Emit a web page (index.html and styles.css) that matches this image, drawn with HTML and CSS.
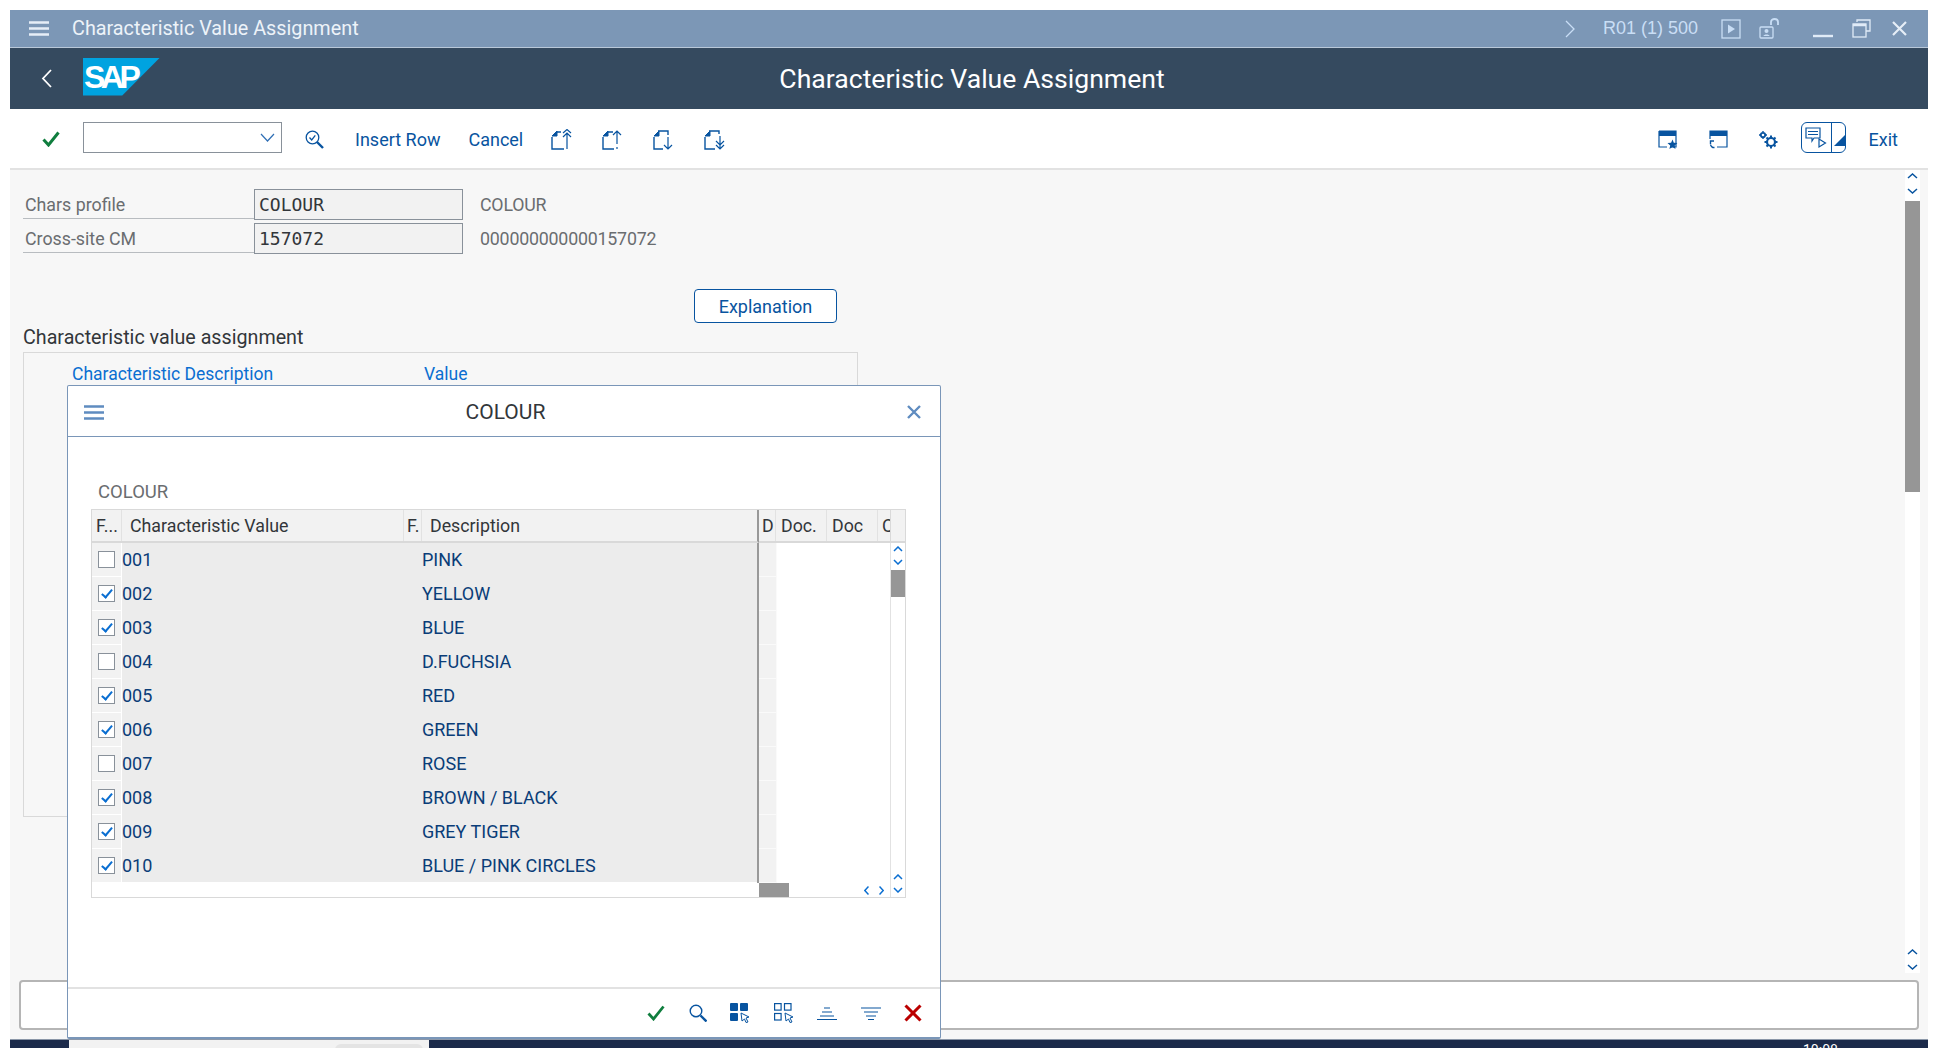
FILE: index.html
```html
<!DOCTYPE html>
<html lang="en">
<head>
  <meta charset="UTF-8" />
  <title>Characteristic Value Assignment</title>
  <link rel="stylesheet" href="styles.css">
</head>
<body>
  <div class="window">
    <!-- Title bar -->
    <div class="titlebar">
      <svg class="menu-icon" width="20" height="15" viewBox="0 0 20 15"><path d="M0 1.5h20M0 7.5h20M0 13.5h20" stroke="#e6eef7" stroke-width="2.4"/></svg>
      <span class="titlebar-text">Characteristic Value Assignment</span>
      <div class="titlebar-right">
        <svg width="10" height="18" viewBox="0 0 10 18"><path d="M1 1l8 8-8 8" fill="none" stroke="#c9def5" stroke-width="1.3"/></svg>
        <span class="system-text">R01 (1) 500</span>
        <svg width="20" height="20" viewBox="0 0 20 20"><rect x="1" y="1" width="18" height="18" fill="none" stroke="#c9def5" stroke-width="1.3"/><path d="M7 5.5l7 4.5-7 4.5z" fill="#c9def5"/></svg>
        <svg class="lock-icon" width="20" height="21" viewBox="0 0 20 21"><path d="M12 7V4c0-4 7-4 7 0v3" fill="none" stroke="#c9def5" stroke-width="1.8"/><rect x="1" y="9" width="13" height="11" rx="1" fill="none" stroke="#c9def5" stroke-width="1.3"/><circle cx="7.5" cy="13" r="2" fill="#c9def5"/><path d="M4.5 18c0-2 6-2 6 0z" fill="#c9def5"/></svg>
        <svg class="win-min" width="20" height="20" viewBox="0 0 20 20"><path d="M0 17h20" stroke="#e0ebf7" stroke-width="2.4"/></svg>
        <svg class="win-max" width="19" height="19" viewBox="0 0 19 19"><path d="M5 3V1h13v11h-4" fill="none" stroke="#e0ebf7" stroke-width="1.3"/><rect x="1" y="5" width="13" height="13" fill="none" stroke="#e0ebf7" stroke-width="1.3"/><path d="M1 6h13" stroke="#e0ebf7" stroke-width="2.5"/></svg>
        <svg class="win-close" width="15" height="15" viewBox="0 0 15 15"><path d="M1 1l13 13M14 1L1 14" stroke="#e6eef7" stroke-width="2.2"/></svg>
      </div>
    </div>

    <!-- Shell header -->
    <div class="shell-header">
      <svg class="back-icon" width="11" height="19" viewBox="0 0 11 19"><path d="M10 1L2 9.5 10 18" fill="none" stroke="#fff" stroke-width="1.8"/></svg>
      <div class="sap-logo"><span>SAP</span></div>
      <div class="shell-title">Characteristic Value Assignment</div>
    </div>

    <!-- Toolbar -->
    <div class="toolbar">
      <svg class="tb-check" width="18" height="16" viewBox="0 0 18 16"><path d="M1.5 8.5L6.5 14 16.5 1.5" fill="none" stroke="#107e3e" stroke-width="3"/></svg>
      <div class="command-box">
        <svg width="15" height="9" viewBox="0 0 15 9"><path d="M1 1l6.5 7L14 1" fill="none" stroke="#2f6fb5" stroke-width="1.2"/></svg>
      </div>
      <svg class="tb-find" width="19" height="19" viewBox="0 0 19 19"><circle cx="7.5" cy="7.5" r="6.3" fill="none" stroke="#0854a0" stroke-width="1.3"/><path d="M4.5 7.5l2.2 2.4 3.6-4.6" fill="none" stroke="#0854a0" stroke-width="1.3"/><path d="M12 12l6 6" stroke="#0854a0" stroke-width="2.4"/></svg>
      <a class="tb-link tb-insert">Insert Row</a>
      <a class="tb-link tb-cancel">Cancel</a>
      <svg class="tb-page" width="22" height="21" viewBox="0 0 22 21"><path d="M5 3h5M1 8v12h12" fill="none" stroke="#0854a0" stroke-width="1.4"/><path d="M1 7l5-5v5z" fill="#0854a0" stroke="#0854a0"/><path d="M16 20V4M12 8l4-4 4 4M12 4l4-3.5 4 3.5" fill="none" stroke="#0854a0" stroke-width="1.2"/></svg>
      <svg class="tb-page" width="22" height="21" viewBox="0 0 22 21"><path d="M5 3h6M1 8v12h11" fill="none" stroke="#0854a0" stroke-width="1.4"/><path d="M1 7l5-5v5z" fill="#0854a0" stroke="#0854a0"/><path d="M15 15V2M11 6l4-4 4 4M15 18v2" fill="none" stroke="#0854a0" stroke-width="1.2"/></svg>
      <svg class="tb-page" width="22" height="21" viewBox="0 0 22 21"><path d="M5 2h10v4M1 8v12h9" fill="none" stroke="#0854a0" stroke-width="1.4"/><path d="M1 7l5-5v5z" fill="#0854a0" stroke="#0854a0"/><path d="M15 8v12M11 16l4 4 4-4" fill="none" stroke="#0854a0" stroke-width="1.2"/></svg>
      <svg class="tb-page" width="22" height="21" viewBox="0 0 22 21"><path d="M5 2h10v3M1 8v12h10" fill="none" stroke="#0854a0" stroke-width="1.4"/><path d="M1 7l5-5v5z" fill="#0854a0" stroke="#0854a0"/><path d="M16 7v12M12 12l4 4 4-4M12 16l4 4 4-4" fill="none" stroke="#0854a0" stroke-width="1.2"/></svg>

      <div class="toolbar-right">
        <svg class="tb-window" width="20" height="19" viewBox="0 0 20 19"><path d="M1 1h17v16h-5M1 1v16h8" fill="none" stroke="#0854a0" stroke-width="1.2"/><rect x="1" y="1" width="17" height="5" fill="#0854a0"/><path d="M14.500 9.500l1.300 3.300 3.600.3-2.700 2.300.8 3.500-3-1.900-3.100 1.900.8-3.500-2.700-2.300 3.600-.3z" fill="#0854a0"/></svg>
        <svg class="tb-window tb-fav" width="20" height="19" viewBox="0 0 20 19"><path d="M2 9V1h17v16H9" fill="none" stroke="#0854a0" stroke-width="1.2"/><rect x="2" y="1" width="17" height="5" fill="#0854a0"/><path d="M6 11H2.500v3M6.500 17.500a3.500 3.500 0 0 1-4-3" fill="none" stroke="#0854a0" stroke-width="1.4"/></svg>
        <svg class="tb-window tb-gears" width="19" height="18" viewBox="0 0 19 18"><circle cx="4" cy="4" r="2.200" fill="none" stroke="#0854a0" stroke-width="1.800"/><path d="M4 0v1M4 7v1M0 4h1M7 4h1" stroke="#0854a0" stroke-width="1.400"/><circle cx="12" cy="11" r="4" fill="none" stroke="#0854a0" stroke-width="2.200"/><path d="M12 4.500v2.500M12 15v2.500M5.500 11H8M16 11h2.500M7.500 6.500l1.800 1.800M16.500 15.500l-1.800-1.800M16.500 6.500l-1.800 1.800M7.500 15.500l1.800-1.800" stroke="#0854a0" stroke-width="2"/></svg>
        <div class="tb-split">
          <div class="tb-split-main">
            <svg width="22" height="22" viewBox="0 0 22 22"><path d="M1 1h14v10H9l-2 3v-3H1z" fill="none" stroke="#0854a0" stroke-width="1.2"/><path d="M3 4.500h10M3 7.500h10" stroke="#0854a0" stroke-width="1.200"/><path d="M14 12v8l6.500-4z" fill="none" stroke="#0854a0" stroke-width="1.200"/></svg>
          </div>
          <div class="tb-split-arrow"><svg width="11" height="11" viewBox="0 0 11 11"><path d="M11 0v11H0z" fill="#0854a0"/></svg></div>
        </div>
        <a class="tb-link tb-exit">Exit</a>
      </div>
    </div>

    <!-- Main content -->
    <div class="content">
      <div class="main-row">
        <div class="main-area">
          <div class="form-row">
            <label class="form-label">Chars profile</label>
            <div class="form-input">COLOUR</div>
            <span class="form-value">COLOUR</span>
          </div>
          <div class="form-row">
            <label class="form-label">Cross-site CM</label>
            <div class="form-input">157072</div>
            <span class="form-value">000000000000157072</span>
          </div>
          <button class="explain-button">Explanation</button>
          <h3 class="section-title">Characteristic value assignment</h3>
          <div class="group-box">
            <span class="group-col-one">Characteristic Description</span>
            <span class="group-col-two">Value</span>
          </div>
        </div>
        <div class="page-scroll">
          <svg class="chev" width="11" height="21" viewBox="0 0 11 21"><path d="M1 5l4.500-4L10 5M1 16l4.500 4 4.500-4" fill="none" stroke="#0854a0" stroke-width="1.500"/></svg>
          <div class="page-thumb"></div>
          <svg class="chev page-chev-end" width="11" height="21" viewBox="0 0 11 21"><path d="M1 5l4.500-4L10 5M1 16l4.500 4 4.500-4" fill="none" stroke="#0854a0" stroke-width="1.500"/></svg>
        </div>
      </div>
      <div class="message-box"></div>
    </div>

    <!-- Bottom bar -->
    <div class="taskbar">
      <div class="taskbar-tab"><div class="taskbar-pill"></div></div>
      <span class="taskbar-time">10:08</span>
    </div>

    <!-- Popup -->
    <div class="modal">
      <div class="modal-header">
        <svg width="20" height="15" viewBox="0 0 20 15"><path d="M0 1.500h20M0 7.500h20M0 13.500h20" stroke="#5f8cc0" stroke-width="2.400"/></svg>
        <span class="modal-title">COLOUR</span>
        <svg width="14" height="14" viewBox="0 0 14 14"><path d="M1 1l12 12M13 1L1 13" stroke="#5f8cc0" stroke-width="2.400"/></svg>
      </div>
      <div class="modal-body">
        <div class="table-caption">COLOUR</div>
        <div class="value-table">
          <div class="head-fixed">
            <div class="head-cell col-sel">F...</div>
            <div class="head-cell col-value">Characteristic Value</div>
            <div class="head-cell col-f">F.</div>
            <div class="head-cell col-desc">Description</div>
          </div>
          <div class="head-free">
            <div class="head-cell col-d">D</div>
            <div class="head-cell col-doc">Doc.</div>
            <div class="head-cell col-doc">Doc</div>
            <div class="head-cell col-clip">C</div>
          </div>
          <div class="head-corner"></div>

          <div class="rows-fixed">
            <div class="row"><div class="row-sel"><span class="check"></span></div><div class="row-main"><span class="row-code">001</span><span>PINK</span></div></div>
            <div class="row"><div class="row-sel"><span class="check checked"></span></div><div class="row-main"><span class="row-code">002</span><span>YELLOW</span></div></div>
            <div class="row"><div class="row-sel"><span class="check checked"></span></div><div class="row-main"><span class="row-code">003</span><span>BLUE</span></div></div>
            <div class="row"><div class="row-sel"><span class="check"></span></div><div class="row-main"><span class="row-code">004</span><span>D.FUCHSIA</span></div></div>
            <div class="row"><div class="row-sel"><span class="check checked"></span></div><div class="row-main"><span class="row-code">005</span><span>RED</span></div></div>
            <div class="row"><div class="row-sel"><span class="check checked"></span></div><div class="row-main"><span class="row-code">006</span><span>GREEN</span></div></div>
            <div class="row"><div class="row-sel"><span class="check"></span></div><div class="row-main"><span class="row-code">007</span><span>ROSE</span></div></div>
            <div class="row"><div class="row-sel"><span class="check checked"></span></div><div class="row-main"><span class="row-code">008</span><span>BROWN / BLACK</span></div></div>
            <div class="row"><div class="row-sel"><span class="check checked"></span></div><div class="row-main"><span class="row-code">009</span><span>GREY TIGER</span></div></div>
            <div class="row"><div class="row-sel"><span class="check checked"></span></div><div class="row-main"><span class="row-code">010</span><span>BLUE / PINK CIRCLES</span></div></div>
          </div>
          <div class="rows-free">
            <div class="free-cell"></div><div class="free-cell"></div><div class="free-cell"></div><div class="free-cell"></div><div class="free-cell"></div>
            <div class="free-cell"></div><div class="free-cell"></div><div class="free-cell"></div><div class="free-cell"></div><div class="free-cell"></div>
          </div>
          <div class="table-scroll">
            <svg class="chev" width="10" height="19" viewBox="0 0 10 19"><path d="M1 5l4-4 4 4M1 14l4 4 4-4" fill="none" stroke="#0a6ed1" stroke-width="1.500"/></svg>
            <div class="table-thumb"></div>
            <svg class="chev table-chev-end" width="10" height="19" viewBox="0 0 10 19"><path d="M1 5l4-4 4 4M1 14l4 4 4-4" fill="none" stroke="#0a6ed1" stroke-width="1.500"/></svg>
          </div>
          <div class="foot-fixed"></div>
          <div class="foot-free">
            <div class="hscroll-thumb"></div>
            <svg width="5" height="9" viewBox="0 0 5 9" class="hscroll-left"><path d="M4.500.500L.8 4.500l3.700 4" fill="none" stroke="#0a6ed1" stroke-width="1.500"/></svg>
            <svg width="5" height="9" viewBox="0 0 5 9"><path d="M.5.500l3.700 4-3.700 4" fill="none" stroke="#0a6ed1" stroke-width="1.500"/></svg>
          </div>
        </div>
      </div>
      <div class="modal-footer">
        <svg width="18" height="16" viewBox="0 0 18 16"><path d="M1.500 8.500L6.500 14 16.500 1.500" fill="none" stroke="#107e3e" stroke-width="2.800"/></svg>
        <svg width="18" height="18" viewBox="0 0 18 18"><circle cx="7" cy="7" r="5.800" fill="none" stroke="#0854a0" stroke-width="1.400"/><path d="M11.500 11.500l6 6" stroke="#0854a0" stroke-width="2.400"/></svg>
        <svg width="20" height="20" viewBox="0 0 20 20"><rect x="0" y="0" width="8" height="8" rx="1" fill="#0854a0"/><rect x="10" y="0" width="8" height="8" rx="1" fill="#0854a0"/><rect x="0" y="10" width="8" height="8" rx="1" fill="#0854a0"/><path d="M11 10l8 4-3 1 2 4-2 .5-1.500-3.500-2.500 2z" fill="#fff" stroke="#0854a0"/></svg>
        <svg width="20" height="20" viewBox="0 0 20 20"><rect x=".6" y=".6" width="6.500" height="6.500" fill="none" stroke="#0854a0" stroke-width="1.200"/><rect x="10.500" y=".6" width="6.500" height="6.500" fill="none" stroke="#0854a0" stroke-width="1.200"/><rect x=".6" y="10.500" width="6.500" height="6.500" fill="none" stroke="#0854a0" stroke-width="1.200"/><path d="M11 10l8 4-3 1 2 4-2 .5-1.500-3.500-2.500 2z" fill="#fff" stroke="#0854a0"/></svg>
        <svg width="20" height="13" viewBox="0 0 20 13"><path d="M7 1h6M5 5h10M3 9h14M0 12.500h20" stroke="#0854a0" stroke-width="1.200"/></svg>
        <svg width="20" height="13" viewBox="0 0 20 13"><path d="M0 1h20M3 5h14M5 9h10M7 12.500h6" stroke="#0854a0" stroke-width="1.200"/></svg>
        <svg width="18" height="18" viewBox="0 0 18 18"><path d="M1.500 1.500l15 15M16.500 1.500l-15 15" stroke="#bb0000" stroke-width="3"/></svg>
      </div>
    </div>
  </div>
</body>
</html>
```

FILE: styles.css
```css
html, body {
  margin: 0;
  padding: 0;
  height: 100%;
  overflow: hidden;
  background-color: #fff;
}

body {
  font-family: Roboto, "Liberation Sans", sans-serif;
  font-size: 17.8px;
}

.window {
  position: relative;
  display: flex;
  flex-direction: column;
  height: 1038px;
  margin: 10px 10px 0;
  background-color: #f7f7f7;
}

/* Title bar */
.titlebar {
  display: flex;
  align-items: center;
  flex: 0 0 38px;
  padding-left: 19px;
  background-color: #7c97b6;
  border-bottom: 1px solid #b9c8d9;
  box-sizing: border-box;
}

.titlebar-text {
  margin-left: 23px;
  font-size: 19.8px;
  color: #edf3f9;
}

.titlebar-right {
  display: flex;
  align-items: center;
  margin-left: auto;
  padding-right: 21px;
}

.system-text {
  margin: 0 23px 0 28px;
  font-family: "Liberation Sans", sans-serif;
  font-size: 18px;
  color: #c9def5;
}

.lock-icon {
  margin-left: 18px;
}

.win-min {
  margin-left: 34px;
}

.win-max {
  margin-left: 19px;
}

.win-close {
  margin-left: 21px;
}

/* Shell header */
.shell-header {
  position: relative;
  display: flex;
  align-items: center;
  flex: 0 0 61px;
  padding-left: 31px;
  background-color: #354a5f;
}

.sap-logo {
  width: 77px;
  height: 38px;
  margin: -4px 0 0 31px;
  background-color: #00a3e0;
  clip-path: polygon(0 0, 100% 0, 51% 100%, 0 100%);
}

.sap-logo span {
  display: block;
  padding: 2px 0 0 1px;
  font-family: "Liberation Sans", sans-serif;
  font-size: 32px;
  line-height: 34px;
  font-weight: bold;
  letter-spacing: -4.5px;
  color: #fff;
}

.shell-title {
  position: absolute;
  left: 6px;
  right: 0;
  text-align: center;
  font-size: 26.6px;
  color: #fff;
}

/* Toolbar */
.toolbar {
  display: flex;
  align-items: center;
  flex: 0 0 61px;
  padding-left: 32px;
  background-color: #fff;
  border-bottom: 2px solid #e2e2e2;
  box-sizing: border-box;
}

.command-box {
  display: flex;
  align-items: center;
  justify-content: flex-end;
  width: 199px;
  height: 31px;
  margin: -2px 0 0 23px;
  padding-right: 6px;
  background-color: #fff;
  border: 1px solid #89919a;
  box-sizing: border-box;
}

.tb-find {
  margin: 2px 0 0 23px;
}

.tb-link {
  padding-top: 2px;
  font-size: 18px;
  color: #0854a0;
}

.tb-insert {
  margin-left: 31px;
}

.tb-cancel {
  margin-left: 28px;
}

.tb-page {
  margin: 2px 0 0 29px;
}

.tb-cancel + .tb-page {
  margin-left: 28px;
}

.toolbar-right {
  display: flex;
  align-items: center;
  margin-left: auto;
  padding-right: 30px;
}

.tb-window {
  margin-top: 2px;
}

.tb-fav {
  margin-left: 30px;
}

.tb-gears {
  margin-left: 31px;
}

.tb-split {
  display: flex;
  width: 45px;
  height: 31px;
  margin: -2px 0 0 23px;
  border: 1px solid #0854a0;
  border-radius: 6px;
  box-sizing: border-box;
}

.tb-split-main {
  display: flex;
  align-items: center;
  padding-left: 3px;
  width: 28px;
  border-right: 1px solid #0854a0;
}

.tb-split-arrow {
  display: flex;
  align-items: flex-end;
  padding: 0 0 6px 2px;
}

.tb-exit {
  margin-left: 23px;
}

/* Main content */
.content {
  display: flex;
  flex-direction: column;
  flex: 1;
  min-height: 0;
}

.main-row {
  display: flex;
  flex: 0 0 803px;
}

.main-area {
  flex: 1;
  padding: 19px 0 0 13px;
}

.form-row {
  display: flex;
  align-items: center;
  height: 30px;
  margin-bottom: 4px;
}

.form-label {
  width: 231px;
  height: 30px;
  padding-left: 2px;
  line-height: 32px;
  color: #6a6d70;
  border-bottom: 1px solid #b8bcc0;
  box-sizing: border-box;
}

.form-input {
  width: 209px;
  height: 31px;
  padding-left: 4px;
  line-height: 30px;
  font-family: "DejaVu Sans Mono", "Liberation Mono", monospace;
  font-size: 18px;
  color: #32363a;
  background-color: #f2f2f2;
  border: 1px solid #89919a;
  box-sizing: border-box;
}

.form-value {
  margin-left: 17px;
  letter-spacing: -0.2px;
  color: #6a6d70;
}

.explain-button {
  display: block;
  width: 143px;
  height: 34px;
  margin: 36px 0 0 671px;
  padding: 0;
  font-family: inherit;
  font-size: 18px;
  color: #0854a0;
  background-color: #fff;
  border: 1.5px solid #0854a0;
  border-radius: 4px;
}

.section-title {
  margin: 2px 0 0;
  height: 26px;
  line-height: 26px;
  font-size: 19.7px;
  font-weight: normal;
  color: #32363a;
}

.group-box {
  display: flex;
  height: 465px;
  margin-top: 1px;
  width: 835px;
  padding: 11px 0 0 48px;
  border: 1px solid #d9d9d9;
  box-sizing: border-box;
  font-size: 17.5px;
  color: #0a6ed1;
}

.group-col-one {
  width: 352px;
}

.page-scroll {
  display: flex;
  flex-direction: column;
  align-items: center;
  flex: 0 0 15px;
  margin-right: 8px;
  background-color: #fff;
}

.chev {
  display: block;
  flex: 0 0 auto;
}

.page-scroll .chev {
  margin-top: 3px;
}

.page-thumb {
  width: 15px;
  height: 291px;
  margin-top: 7px;
  background-color: #969696;
}

.page-scroll .page-chev-end {
  margin-top: auto;
  margin-bottom: 3px;
}

.message-box {
  height: 50px;
  margin: 7px 9px 0;
  background-color: #fff;
  border: 2px solid #b5b5b5;
  border-radius: 4px;
  box-sizing: border-box;
}

/* Bottom bar */
.taskbar {
  display: flex;
  flex: 0 0 9px;
  padding-left: 59px;
  background-color: #1b2a4a;
  border-top: 1px solid #8b97a8;
  box-sizing: border-box;
  overflow: hidden;
}

.taskbar-tab {
  width: 360px;
  background-color: #f2f2f2;
}

.taskbar-pill {
  width: 88px;
  height: 12px;
  margin: 4px 0 0 266px;
  background-color: #e4e4e4;
  border-radius: 6px;
}

.taskbar-time {
  margin: 3px 0 0 1374px;
  font-size: 14px;
  line-height: 14px;
  color: #fff;
}

/* Popup */
.modal {
  position: absolute;
  left: 57px;
  top: 375px;
  display: flex;
  flex-direction: column;
  width: 874px;
  height: 654px;
  background-color: #fff;
  border: 1px solid #7a96b8;
  border-bottom-width: 2px;
  border-radius: 2px;
  box-sizing: border-box;
}

.modal-header {
  display: flex;
  align-items: center;
  justify-content: space-between;
  flex: 0 0 51px;
  padding: 2px 19px 0 16px;
  border-bottom: 1px solid #7a96b8;
  box-sizing: border-box;
}

.modal-title {
  font-size: 21px;
  color: #32363a;
}

.modal-body {
  flex: 1;
  padding: 46px 0 0 23px;
}

.table-caption {
  height: 26px;
  padding-left: 7px;
  line-height: 18px;
  font-size: 18.5px;
  color: #6a6d70;
}

.value-table {
  display: grid;
  grid-template-columns: 667px 131px 15px;
  grid-template-rows: 33px 340px 14px;
  width: 815px;
  border: 1px solid #d9d9d9;
  box-sizing: border-box;
  color: #32363a;
}

.head-fixed,
.head-free {
  display: flex;
  background-color: #f2f2f2;
  border-bottom: 2px solid #d9d9d9;
  box-sizing: border-box;
}

.head-fixed {
  border-right: 2px solid #999;
}

.head-corner {
  background-color: #f2f2f2;
  border-bottom: 2px solid #d9d9d9;
  border-left: 1px solid #d9d9d9;
  box-sizing: border-box;
}

.head-cell {
  height: 31px;
  line-height: 32px;
  border-right: 1px solid #e2e2e2;
  box-sizing: border-box;
  white-space: nowrap;
  overflow: hidden;
}

.col-sel {
  width: 30px;
  padding-left: 4px;
}

.col-value {
  width: 282px;
  padding-left: 8px;
}

.col-f {
  width: 18px;
  padding-left: 3px;
}

.col-desc {
  flex: 1;
  padding-left: 8px;
  border-right: 0;
}

.col-d {
  width: 17px;
  padding-left: 3px;
}

.col-doc {
  width: 51px;
  padding-left: 5px;
}

.col-clip {
  flex: 1;
  padding-left: 4px;
  border-right: 0;
}

.rows-fixed {
  border-right: 2px solid #999;
}

.row {
  display: flex;
  height: 34px;
  line-height: 34px;
  font-size: 18px;
  color: #0a3d78;
}

.row:last-child .row-main {
  height: 33px;
}

.row-sel {
  display: flex;
  align-items: center;
  flex: 0 0 29px;
  padding-left: 6px;
  background-color: #f2f2f2;
  border-bottom: 1px solid #fff;
  box-sizing: border-box;
}

.row-main {
  display: flex;
  flex: 1;
  margin-left: 1px;
  background-color: #ececec;
}

.row-code {
  width: 300px;
}

.check {
  position: relative;
  display: block;
  width: 17px;
  height: 17px;
  background-color: #fff;
  border: 1px solid #89919a;
  box-sizing: border-box;
}

.check.checked::after {
  content: "";
  position: absolute;
  left: 5px;
  top: 1px;
  width: 4px;
  height: 9px;
  border: solid #0a6ed1;
  border-width: 0 2px 2px 0;
  transform: rotate(40deg);
}

.free-cell {
  width: 18px;
  height: 34px;
  background-color: #f2f2f2;
  border-bottom: 1px solid #fafafa;
  border-right: 1px solid #fafafa;
  box-sizing: border-box;
}

.table-scroll {
  grid-column: 3;
  grid-row: 2 / 4;
  display: flex;
  flex-direction: column;
  align-items: center;
  border-left: 1px solid #e2e2e2;
}

.table-scroll .chev {
  margin-top: 3px;
}

.table-thumb {
  width: 14px;
  height: 27px;
  margin-top: 5px;
  background-color: #969696;
}

.table-scroll .table-chev-end {
  margin-top: auto;
  margin-bottom: 4px;
}

.foot-free {
  display: flex;
  align-items: center;
  gap: 10px;
}

.hscroll-thumb {
  align-self: stretch;
  width: 30px;
  background-color: #969696;
}

.hscroll-left {
  margin-left: auto;
}

.foot-free svg:last-child {
  margin-right: 6px;
}

.modal-footer {
  display: flex;
  align-items: center;
  justify-content: flex-end;
  flex: 0 0 50px;
  padding-right: 18px;
  gap: 23.5px;
  border-top: 2px solid #e2e2e2;
  box-sizing: border-box;
}
```
